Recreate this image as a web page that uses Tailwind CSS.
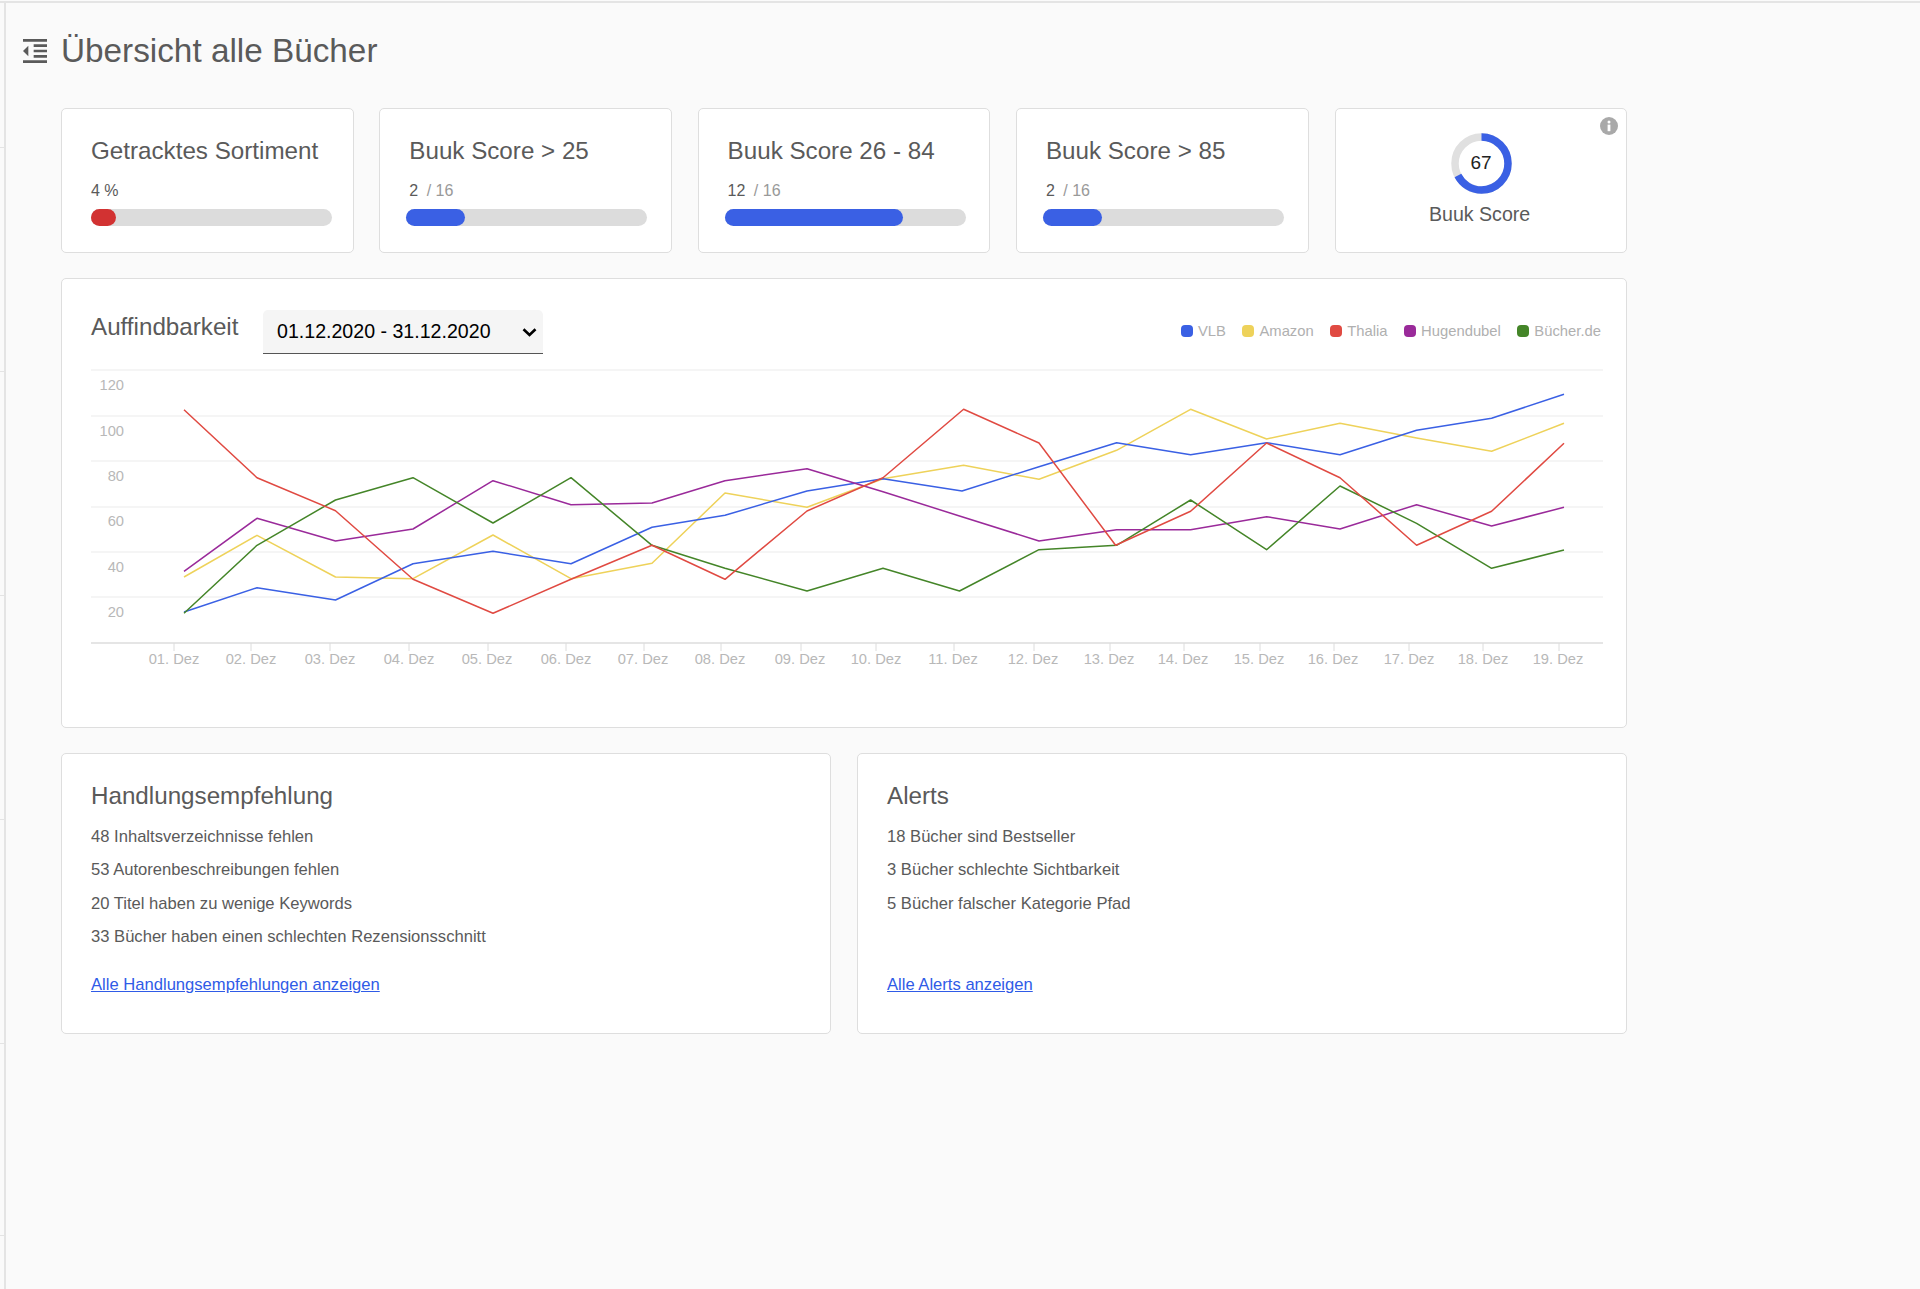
<!DOCTYPE html>
<html lang="de">

<head>
    <meta charset="UTF-8" />
    <meta name="viewport" content="width=device-width, initial-scale=1.0" />
    <title>Übersicht alle Bücher</title>
    <script src="https://cdn.jsdelivr.net/npm/@tailwindcss/browser@4"></script>
</head>

<body class="bg-[#fafafa] font-['Liberation_Sans',sans-serif] text-[#5a5a5a]">

    <div class="flex h-[1288px] mt-[1px] border-t-2 border-[#e4e4e4]">

        <!-- left rail ticks -->
        <div class="w-[4px] shrink-0">
            <div class="h-[145px] border-b border-[#e4e4e4]"></div>
            <div class="h-[224px] border-b border-[#e4e4e4]"></div>
            <div class="h-[224px] border-b border-[#e4e4e4]"></div>
            <div class="h-[224px] border-b border-[#e4e4e4]"></div>
            <div class="h-[224px] border-b border-[#e4e4e4]"></div>
            <div class="h-[192px] border-b border-[#e4e4e4]"></div>
        </div>

        <div class="flex-1 border-l-2 border-[#e4e4e4] pr-[293px]">

            <header class="flex items-center h-[64px] mt-[15px] pl-[13px] gap-[10px]">
                <svg class="w-[32px] h-[32px] mt-[1px] fill-[#5a5a5a]" viewBox="0 0 24 24">
                    <path d="M11 17h10v-2H11v2zm-8-5l4 4V8l-4 4zm0 9h18v-2H3v2zM3 3v2h18V3H3zm8 6h10V7H11v2zm0 4h10v-2H11v2z" />
                </svg>
                <h1 class="text-[33.3px] leading-none mt-[2px]">Übersicht alle Bücher</h1>
            </header>

            <main class="ml-[55px] mt-[26px] flex flex-col gap-[25px]">

                <section class="grid grid-cols-5 gap-x-[25.5px]">
                    <div class="h-[145px] bg-white border border-[#dedede] rounded-[5px] pl-[29px] pt-[27px]">
                        <p class="text-[24.2px] leading-[30px]">Getracktes Sortiment</p>
                        <p class="text-[16px] leading-[18px] mt-[16px]">4 %</p>
                        <div class="w-[241px] h-[17px] mt-[9px] rounded-full bg-[#dcdcdc]">
                            <div class="w-[25px] h-full rounded-full bg-[#d23232]"></div>
                        </div>
                    </div>
                    <div class="h-[145px] bg-white border border-[#dedede] rounded-[5px] pl-[29px] pt-[27px]">
                        <p class="text-[24.2px] leading-[30px]">Buuk Score &gt; 25</p>
                        <p class="text-[16px] leading-[18px] mt-[16px]">2 <span class="ml-[4px] text-[#999]">/ 16</span></p>
                        <div class="w-[241px] h-[17px] mt-[9px] -ml-[3px] rounded-full bg-[#dcdcdc]">
                            <div class="w-[59px] h-full rounded-full bg-[#3a60e4]"></div>
                        </div>
                    </div>
                    <div class="h-[145px] bg-white border border-[#dedede] rounded-[5px] pl-[29px] pt-[27px]">
                        <p class="text-[24.2px] leading-[30px]">Buuk Score 26 - 84</p>
                        <p class="text-[16px] leading-[18px] mt-[16px]">12 <span class="ml-[4px] text-[#999]">/ 16</span></p>
                        <div class="w-[241px] h-[17px] mt-[9px] -ml-[3px] rounded-full bg-[#dcdcdc]">
                            <div class="w-[178px] h-full rounded-full bg-[#3a60e4]"></div>
                        </div>
                    </div>
                    <div class="h-[145px] bg-white border border-[#dedede] rounded-[5px] pl-[29px] pt-[27px]">
                        <p class="text-[24.2px] leading-[30px]">Buuk Score &gt; 85</p>
                        <p class="text-[16px] leading-[18px] mt-[16px]">2 <span class="ml-[4px] text-[#999]">/ 16</span></p>
                        <div class="w-[241px] h-[17px] mt-[9px] -ml-[3px] rounded-full bg-[#dcdcdc]">
                            <div class="w-[59px] h-full rounded-full bg-[#3a60e4]"></div>
                        </div>
                    </div>
                    <div class="relative h-[145px] ml-[1px] bg-white border border-[#dedede] rounded-[5px] flex flex-col items-center pt-[24px]">
                        <div class="relative w-[61px] h-[61px]">
                            <svg class="w-full h-full -rotate-90" viewBox="0 0 61 61" fill="none" stroke-width="7.5">
                                <circle cx="30.5" cy="30.5" r="26.5" stroke="#e0e0e0" />
                                <circle cx="30.5" cy="30.5" r="26.5" stroke="#3a60e4" stroke-dasharray="111.6 166.5" />
                            </svg>
                            <span class="absolute inset-0 flex items-center justify-center text-[19px] text-[#222]">67</span>
                        </div>
                        <p class="text-[19.6px] leading-[24px] mt-[8px] -ml-[3px]">Buuk Score</p>
                        <svg class="absolute top-[8px] right-[8px] w-[18px] h-[18px]" viewBox="0 0 18 18">
                            <circle cx="9" cy="9" r="9" fill="#a9a9a9" />
                            <circle cx="9" cy="5" r="1.5" fill="#fff" />
                            <rect x="7.6" y="7.6" width="2.8" height="6.6" fill="#fff" />
                        </svg>
                    </div>
                </section>

                <section class="h-[450px] bg-white border border-[#dedede] rounded-[5px]">
                    <div class="flex items-start h-[82px] pl-[29px] pr-[25px]">
                        <h2 class="text-[24.2px] leading-[30px] mt-[33px] w-[172px]">Auffindbarkeit</h2>
                        <div class="relative mt-[31px] w-[280px] h-[44px]">
                            <select class="w-full h-full appearance-none bg-[#f5f5f5] rounded-t-[5px] border-b border-[#555] pl-[14px] text-[19.6px] text-black">
                                <option>01.12.2020 - 31.12.2020</option>
                            </select>
                            <svg class="absolute right-[6px] top-[18px] w-[15px] h-[9px]" viewBox="0 0 15 9" fill="none" stroke="#000" stroke-width="2.6">
                                <path d="M1.5 1.2l6 5.8 6-5.8" />
                            </svg>
                        </div>
                        <ul class="ml-auto mt-[45px] flex text-[14.8px] leading-[14px] text-[#b0b0b0]">
                            <li class="flex items-center gap-[5px] mr-[16.5px]"><span class="w-[12px] h-[12px] rounded-[4px] bg-[#3a60e4]"></span>VLB</li>
                            <li class="flex items-center gap-[5px] mr-[16.5px]"><span class="w-[12px] h-[12px] rounded-[4px] bg-[#eed25a]"></span>Amazon</li>
                            <li class="flex items-center gap-[5px] mr-[16.5px]"><span class="w-[12px] h-[12px] rounded-[4px] bg-[#e04a42]"></span>Thalia</li>
                            <li class="flex items-center gap-[5px] mr-[16.5px]"><span class="w-[12px] h-[12px] rounded-[4px] bg-[#9a2a9a]"></span>Hugendubel</li>
                            <li class="flex items-center gap-[5px]"><span class="w-[12px] h-[12px] rounded-[4px] bg-[#448528]"></span>Bücher.de</li>
                        </ul>
                    </div>
                    <svg class="block" width="1563" height="340" viewBox="62 360 1563 340" fill="none">
                        <g stroke="#f2f2f2" stroke-width="1.5">
                            <path d="M91 369H1603M91 415H1603M91 460H1603M91 506H1603M91 551H1603M91 596H1603" />
                        </g>
                        <path d="M91 642H1603" stroke="#dcdcdc" stroke-width="1.5" />
                        <path stroke="#dcdcdc" d="M174 642v8M251 642v8M330 642v8M409 642v8M488 642v8M566 642v8M644 642v8M721 642v8M801 642v8M876 642v8M954 642v8M1034 642v8M1110 642v8M1184 642v8M1260 642v8M1334 642v8M1409 642v8M1483 642v8M1559 642v8" />

                        <g class="text-[14.7px] fill-[#b8b8b8]" text-anchor="end">
                            <text x="124" y="389">120</text>
                            <text x="124" y="435">100</text>
                            <text x="124" y="480">80</text>
                            <text x="124" y="525">60</text>
                            <text x="124" y="571">40</text>
                            <text x="124" y="616">20</text>
                        </g>
                        <g class="text-[14.7px] fill-[#b8b8b8]" text-anchor="middle">
                            <text x="174" y="663">01. Dez</text>
                            <text x="251" y="663">02. Dez</text>
                            <text x="330" y="663">03. Dez</text>
                            <text x="409" y="663">04. Dez</text>
                            <text x="487" y="663">05. Dez</text>
                            <text x="566" y="663">06. Dez</text>
                            <text x="643" y="663">07. Dez</text>
                            <text x="720" y="663">08. Dez</text>
                            <text x="800" y="663">09. Dez</text>
                            <text x="876" y="663">10. Dez</text>
                            <text x="953" y="663">11. Dez</text>
                            <text x="1033" y="663">12. Dez</text>
                            <text x="1109" y="663">13. Dez</text>
                            <text x="1183" y="663">14. Dez</text>
                            <text x="1259" y="663">15. Dez</text>
                            <text x="1333" y="663">16. Dez</text>
                            <text x="1409" y="663">17. Dez</text>
                            <text x="1483" y="663">18. Dez</text>
                            <text x="1558" y="663">19. Dez</text>
                        </g>

                        <g stroke-width="1.5" stroke-linejoin="round">
                            <polyline stroke="#eed25a" points="184,576 257,534.3 335.5,576 413,577.7 493,534 571,577.7 652,562.3 725,492 807,506.3 883,477.7 963.6,464.3 1039,478.3 1116.6,449.3 1190.6,408.3 1266.6,438 1340,422.3 1416.6,437 1491.6,450.3 1564,422.3" />
                            <polyline stroke="#3a60e4" points="184,611 257,586.7 335.5,599 413,562.7 493,550.3 571,562.7 652,526.3 725,514.3 807,490 883,477.7 962,490 1039,465.7 1116.6,441.7 1190.6,453.7 1266.6,441.7 1340,453.7 1416.6,429.3 1491.6,417.3 1564,393.3" />
                            <polyline stroke="#9a2a9a" points="184,570.3 257,517.3 335.5,540 413,528 493,479.7 571,503.7 652,502 725,479.7 807,467.7 883,490.7 959.5,515 1039,540 1116.6,528.7 1190.6,528.7 1266.6,515.7 1340,528 1416.6,503.7 1491.6,525 1564,506.3" />
                            <polyline stroke="#448528" points="184,612.3 257,544.3 335.5,499 413,476.7 493,522 571,476.7 652,544.3 725,567.3 807,590 883,567.3 959.5,590 1039,548.7 1116.6,544.3 1190.6,499 1266.6,548.7 1340,485 1416.6,522.3 1491.6,567.3 1564,549" />
                            <polyline stroke="#e04a42" points="184,408.7 257,476.7 335.5,509.7 413,578.3 493,612.3 571,578.3 652,544.3 725,578.3 807,510 883,476.7 963.6,408.3 1039,442 1115.6,544.3 1190.6,510.3 1266.6,442 1340,476.7 1416.6,544.3 1491.6,510.3 1564,442.3" />
                        </g>
                    </svg>
                </section>

                <section class="grid grid-cols-2 gap-x-[26px]">
                    <div class="h-[281px] bg-white border border-[#dedede] rounded-[5px] pl-[29px] pt-[27px]">
                        <h2 class="text-[24.2px] leading-[30px]">Handlungsempfehlung</h2>
                        <ul class="mt-[9px] text-[16.6px] leading-[33.3px]">
                            <li>48 Inhaltsverzeichnisse fehlen</li>
                            <li>53 Autorenbeschreibungen fehlen</li>
                            <li>20 Titel haben zu wenige Keywords</li>
                            <li>33 Bücher haben einen schlechten Rezensionsschnitt</li>
                        </ul>
                        <a href="#" class="block mt-[15px] text-[16.6px] leading-[33.3px] text-[#2f5be7] underline">Alle Handlungsempfehlungen anzeigen</a>
                    </div>
                    <div class="h-[281px] bg-white border border-[#dedede] rounded-[5px] pl-[29px] pt-[27px]">
                        <h2 class="text-[24.2px] leading-[30px]">Alerts</h2>
                        <ul class="mt-[9px] h-[133px] text-[16.6px] leading-[33.3px]">
                            <li>18 Bücher sind Bestseller</li>
                            <li>3 Bücher schlechte Sichtbarkeit</li>
                            <li>5 Bücher falscher Kategorie Pfad</li>
                        </ul>
                        <a href="#" class="block mt-[15px] text-[16.6px] leading-[33.3px] text-[#2f5be7] underline">Alle Alerts anzeigen</a>
                    </div>
                </section>
            </main>
        </div>
    </div>

</body>

</html>
